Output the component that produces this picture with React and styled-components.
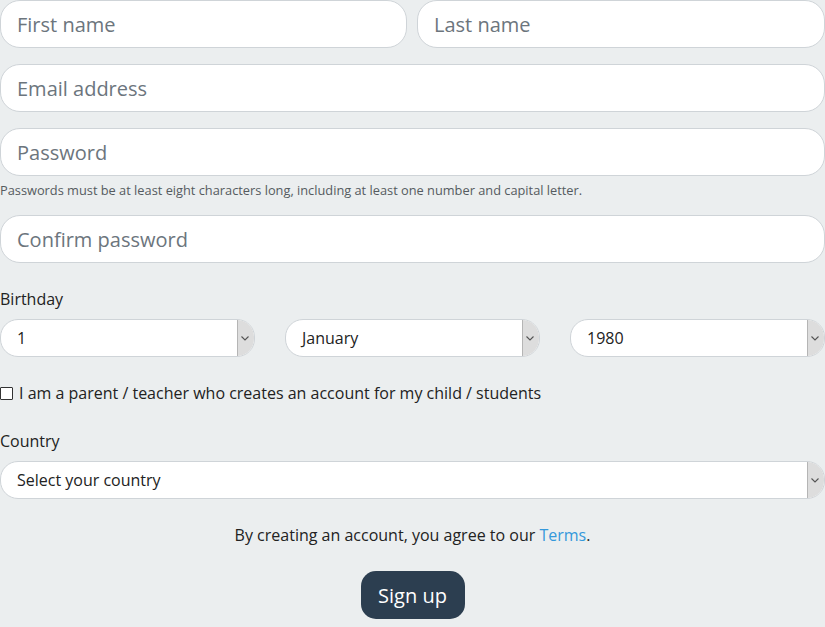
import React from "react";
import styled, { createGlobalStyle } from "styled-components";

const Global = createGlobalStyle`
  html, body { margin: 0; padding: 0; background: #ebeeef; overflow: hidden; }
  body { font-family: "Open Sans", "Noto Sans", sans-serif; color: #222; }
  * { box-sizing: border-box; }
`;

const Form = styled.form`
  display: flex;
  flex-direction: column;
  width: 825px;
`;

const Row = styled.div`
  display: grid;
  grid-template-columns: ${(p) => p.$cols};
  column-gap: ${(p) => p.$gap}px;
`;

const Input = styled.input`
  display: block;
  width: 100%;
  height: 48px;
  margin-top: ${(p) => p.$mt || 0}px;
  padding: 0 16px;
  border: 1px solid #cfd4d8;
  border-radius: 20px;
  background: #fff;
  font-family: inherit;
  font-size: 20px;
  color: #222;
  outline: none;
  &::placeholder { color: #6c757d; }
`;

const Hint = styled.div`
  margin: 6px 0 17px;
  font-size: 12.8px;
  line-height: 16px;
  color: #555b60;
`;

const Label = styled.div`
  margin-top: ${(p) => p.$mt}px;
  margin-bottom: 10px;
  font-size: 16px;
  line-height: 20px;
  color: #222;
`;

const SelectBox = styled.div`
  display: flex;
  align-items: stretch;
  height: 38px;
  border: 1px solid #cfd4d8;
  border-radius: 18px;
  background: #fff;
  overflow: hidden;
`;

const SelectValue = styled.span`
  flex: 1;
  display: flex;
  align-items: center;
  padding-left: 16px;
  font-size: 16px;
  color: #222;
`;

const Arrow = styled.span`
  width: 17px;
  display: flex;
  align-items: center;
  justify-content: center;
  background: #dddddd;
  border-left: 1px solid #b5b5b5;
  padding-right: 2px;
`;

const CheckRow = styled.label`
  display: flex;
  align-items: center;
  gap: 6px;
  margin-top: 26px;
  font-size: 16px;
  line-height: 20px;
  color: #222;
`;

const Box = styled.span`
  width: 13px;
  height: 13px;
  border: 1px solid #333;
  border-radius: 1px;
  background: #fff;
`;

const Terms = styled.p`
  margin: 25px 0 0;
  text-align: center;
  font-size: 16px;
  line-height: 22px;
  color: #222;
`;

const TermsLink = styled.a`
  color: #3498db;
  text-decoration: none;
`;

const Button = styled.button`
  align-self: center;
  margin-top: 25px;
  width: 104px;
  height: 48px;
  border: none;
  border-radius: 15px;
  background: #2c3e50;
  color: #fff;
  font-family: inherit;
  font-size: 20px;
  cursor: pointer;
`;

const Chevron = () => (
  <svg width="8" height="5" viewBox="0 0 8 5">
    <path d="M0.5 0.5 L4 4 L7.5 0.5" fill="none" stroke="#555" strokeWidth="1.1" />
  </svg>
);

const Select = ({ value }) => (
  <SelectBox>
    <SelectValue>{value}</SelectValue>
    <Arrow>
      <Chevron />
    </Arrow>
  </SelectBox>
);

export default function App() {
  return (
    <>
      <Global />
      <Form onSubmit={(e) => e.preventDefault()}>
        <Row $cols="407px 1fr" $gap={10}>
          <Input placeholder="First name" />
          <Input placeholder="Last name" />
        </Row>
        <Input $mt={16} placeholder="Email address" />
        <Input $mt={16} type="password" placeholder="Password" />
        <Hint>
          Passwords must be at least eight characters long, including at least one number and capital letter.
        </Hint>
        <Input type="password" placeholder="Confirm password" />
        <Label $mt={26}>Birthday</Label>
        <Row $cols="1fr 1fr 1fr" $gap={30}>
          <Select value="1" />
          <Select value="January" />
          <Select value="1980" />
        </Row>
        <CheckRow>
          <Box />I am a parent / teacher who creates an account for my child / students
        </CheckRow>
        <Label $mt={28}>Country</Label>
        <Select value="Select your country" />
        <Terms>
          By creating an account, you agree to our <TermsLink href="#">Terms</TermsLink>.
        </Terms>
        <Button type="submit">Sign up</Button>
      </Form>
    </>
  );
}
